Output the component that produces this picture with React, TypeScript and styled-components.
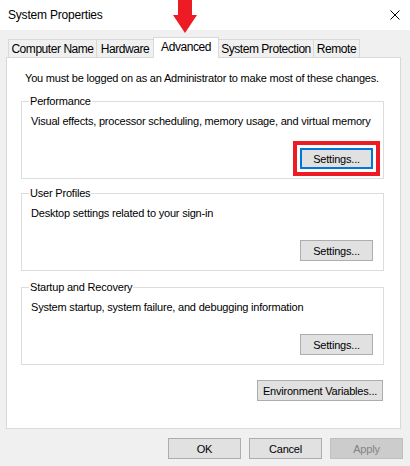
import React from "react";
import styled, { createGlobalStyle } from "styled-components";

const Global = createGlobalStyle`
  html, body { margin: 0; padding: 0; }
  body {
    background: #f0f0f0;
    font-family: "Liberation Sans", Arial, sans-serif;
    font-size: 11px;
    letter-spacing: -0.2px;
    color: #000;
    width: 410px;
    height: 466px;
    overflow: hidden;
  }
`;

const Window = styled.div`
  position: relative;
  width: 410px;
  height: 466px;
  background: #f0f0f0;
`;

const TitleBar = styled.div`
  height: 30px;
  background: #fff;
  display: flex;
  align-items: center;
  justify-content: space-between;
  padding: 0 10px 0 8px;
  box-sizing: border-box;
`;

const Title = styled.span`
  font-size: 12px;
  letter-spacing: -0.2px;
  line-height: 15px;
`;

const CloseIcon = styled.svg`
  width: 10px;
  height: 10px;
  display: block;
`;

const Arrow = styled.svg`
  position: absolute;
  left: 173px;
  top: 0;
  width: 24px;
  height: 34px;
`;

const TabStrip = styled.div`
  display: flex;
  align-items: flex-end;
  padding: 7px 0 0 8px;
`;

const Tab = styled.div<{ $w: number; $active?: boolean }>`
  box-sizing: border-box;
  width: ${(p) => p.$w}px;
  height: ${(p) => (p.$active ? 21 : 18)}px;
  margin-bottom: ${(p) => (p.$active ? -1 : 0)}px;
  margin-left: -1px;
  &:first-child { margin-left: 0; }
  border: 1px solid #d9d9d9;
  border-bottom: none;
  background: ${(p) => (p.$active ? "#fff" : "#f0f0f0")};
  position: relative;
  z-index: ${(p) => (p.$active ? 2 : 1)};
  display: flex;
  align-items: center;
  justify-content: center;
  padding-bottom: ${(p) => (p.$active ? 3 : 0)}px;
  font-size: 12px;
  letter-spacing: -0.45px;
  white-space: nowrap;
`;

const Panel = styled.div`
  box-sizing: border-box;
  margin: 0 9px 0 6px;
  height: 372px;
  background: #fff;
  border: 1px solid #d9d9d9;
  padding: 13px 16px 0 14px;
  display: flex;
  flex-direction: column;
`;

const Intro = styled.div`
  line-height: 15px;
  padding-left: 4px;
  white-space: nowrap;
`;

const Group = styled.fieldset<{ $top: number }>`
  margin: ${(p) => p.$top}px 0 0 0;
  padding: 5px 10px 9px 9px;
  border: 1px solid #dcdcdc;
  min-width: 0;
  display: flex;
  flex-direction: column;
`;

const Legend = styled.legend`
  margin-left: -2px;
  padding: 0 1px;
  line-height: 15px;
`;

const Desc = styled.div`
  line-height: 15px;
  white-space: nowrap;
`;

const ButtonRow = styled.div<{ $top: number; $right?: number }>`
  display: flex;
  justify-content: flex-end;
  gap: 8px;
  margin-top: ${(p) => p.$top}px;
  margin-right: ${(p) => p.$right ?? 0}px;
`;

const Button = styled.button<{ $w?: number; $focused?: boolean; $highlight?: boolean }>`
  box-sizing: border-box;
  width: ${(p) => p.$w ?? 73}px;
  height: 21px;
  padding: 0;
  font-family: inherit;
  font-size: 11px;
  letter-spacing: -0.2px;
  white-space: nowrap;
  color: #000;
  background: #e1e1e1;
  border: ${(p) => (p.$focused ? "2px solid #0078d7" : "1px solid #adadad")};
  border-radius: 0;
  ${(p) => (p.$highlight ? "outline: 4px solid #ed1c24; outline-offset: 3px;" : "")}
  &:disabled {
    color: #838383;
    background: #cccccc;
    border-color: #bfbfbf;
  }
`;

const Footer = styled.div`
  display: flex;
  justify-content: flex-end;
  gap: 8px;
  padding: 9px 7px 0 0;
`;

const tabs: { label: string; w: number; active?: boolean }[] = [
  { label: "Computer Name", w: 89 },
  { label: "Hardware", w: 58 },
  { label: "Advanced", w: 66, active: true },
  { label: "System Protection", w: 96 },
  { label: "Remote", w: 47 },
];

export default function App() {
  return (
    <Window>
      <Global />
      <TitleBar>
        <Title>System Properties</Title>
        <CloseIcon viewBox="0 0 10 10">
          <path d="M0.5 0.5 L9.5 9.5 M9.5 0.5 L0.5 9.5" stroke="#000" strokeWidth="1" fill="none" />
        </CloseIcon>
      </TitleBar>
      <Arrow viewBox="0 0 24 34">
        <polygon points="5,0 19,0 19,15 24,15 12,33 0,15 5,15" fill="#ed1c24" />
      </Arrow>
      <TabStrip>
        {tabs.map((t) => (
          <Tab key={t.label} $w={t.w} $active={t.active}>
            {t.label}
          </Tab>
        ))}
      </TabStrip>
      <Panel>
        <Intro>You must be logged on as an Administrator to make most of these changes.</Intro>
        <Group $top={8}>
          <Legend>Performance</Legend>
          <Desc>Visual effects, processor scheduling, memory usage, and virtual memory</Desc>
          <ButtonRow $top={19}>
            <Button $focused $highlight>Settings...</Button>
          </ButtonRow>
        </Group>
        <Group $top={7}>
          <Legend>User Profiles</Legend>
          <Desc>Desktop settings related to your sign-in</Desc>
          <ButtonRow $top={19}>
            <Button>Settings...</Button>
          </ButtonRow>
        </Group>
        <Group $top={9}>
          <Legend>Startup and Recovery</Legend>
          <Desc>System startup, system failure, and debugging information</Desc>
          <ButtonRow $top={19}>
            <Button>Settings...</Button>
          </ButtonRow>
        </Group>
        <ButtonRow $top={15} $right={1}>
          <Button $w={126}>Environment Variables...</Button>
        </ButtonRow>
      </Panel>
      <Footer>
        <Button>OK</Button>
        <Button>Cancel</Button>
        <Button disabled>Apply</Button>
      </Footer>
    </Window>
  );
}
